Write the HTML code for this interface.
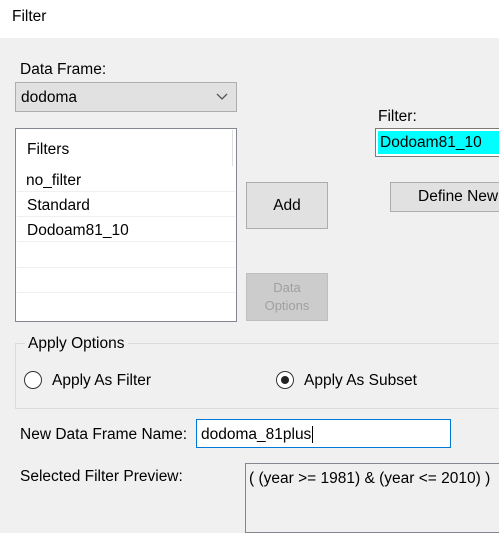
<!DOCTYPE html>
<html><head><meta charset="utf-8"><style>
*{box-sizing:border-box;margin:0;padding:0}
body{width:499px;height:525px;overflow:hidden;background:#f0f0f0;font-family:"Liberation Sans",Arial,sans-serif;font-size:15.5px;color:#000;position:relative}
.a{position:absolute;white-space:nowrap}
.btn{position:absolute;background:#e1e1e1;border:1px solid #adadad;display:flex;align-items:center;justify-content:center;text-align:center}
</style></head><body>
<div class="a" style="left:0;top:0;width:499px;height:38px;background:#fff"></div>
<div class="a" style="left:12px;top:8px;font-size:15.5px">Filter</div>

<div class="a" style="left:20px;top:61px">Data Frame:</div>
<div class="a" style="left:15px;top:82px;width:222px;height:30px;background:#e1e1e1;border:1px solid #adadad"></div>
<div class="a" style="left:21px;top:89px">dodoma</div>
<svg class="a" style="left:216px;top:93px" width="12" height="8"><path d="M1 1 L6 6 L11 1" fill="none" stroke="#555" stroke-width="1.3"/></svg>

<div class="a" style="left:15px;top:128px;width:222px;height:194px;background:#fff;border:1px solid #828790"></div>
<div class="a" style="left:232px;top:130px;width:1px;height:36px;background:#ddd"></div>
<div class="a" style="left:27px;top:141px">Filters</div>
<div class="a" style="left:26px;top:172px">no_filter</div>
<div class="a" style="left:27px;top:197px">Standard</div>
<div class="a" style="left:27px;top:222px">Dodoam81_10</div>
<div class="a" style="left:17px;top:191px;width:218px;height:1px;background:#f0f0f0"></div>
<div class="a" style="left:17px;top:216px;width:218px;height:1px;background:#f0f0f0"></div>
<div class="a" style="left:17px;top:241px;width:218px;height:1px;background:#f0f0f0"></div>
<div class="a" style="left:17px;top:267px;width:218px;height:1px;background:#f0f0f0"></div>
<div class="a" style="left:17px;top:292px;width:218px;height:1px;background:#f0f0f0"></div>

<div class="btn" style="left:246px;top:182px;width:82px;height:47px">Add</div>
<div class="btn" style="left:246px;top:273px;width:82px;height:48px;background:#cccccc;border-color:#bfbfbf;color:#a0a0a0;font-size:13px;line-height:18px">Data<br>Options</div>

<div class="a" style="left:378px;top:108px">Filter:</div>
<div class="a" style="left:375px;top:128px;width:130px;height:29px;border:1px solid #7a7a7a;background:#fff;padding:2px"><div style="background:#00ffff;height:100%;padding:3px 2px">Dodoam81_10</div></div>
<div class="btn" style="left:390px;top:182px;width:130px;height:30px;justify-content:flex-start;padding-left:27px">Define New</div>

<div class="a" style="left:15px;top:343px;width:500px;height:66px;border:1px solid #dcdcdc"></div>
<div class="a" style="left:25px;top:335px;background:#f0f0f0;padding:0 3px">Apply Options</div>
<div class="a" style="left:24px;top:371px;width:18px;height:18px;border-radius:50%;border:1px solid #333;background:#fff"></div>
<div class="a" style="left:52px;top:372px">Apply As Filter</div>
<div class="a" style="left:276px;top:371px;width:18px;height:18px;border-radius:50%;border:1px solid #333;background:#fff"></div>
<div class="a" style="left:281px;top:376px;width:8px;height:8px;border-radius:50%;background:#222"></div>
<div class="a" style="left:304px;top:372px">Apply As Subset</div>

<div class="a" style="left:20px;top:426px">New Data Frame Name:</div>
<div class="a" style="left:196px;top:419px;width:255px;height:29px;border:1px solid #0078d7;background:#fff;padding:6px 4px">dodoma_81plus<span style="border-left:1px solid #000;margin-left:1px"></span></div>

<div class="a" style="left:20px;top:468px">Selected Filter Preview:</div>
<div class="a" style="left:245px;top:463px;width:260px;height:70px;border:1px solid #828790;background:#f0f0f0;padding:6px 3px">( (year &gt;= 1981) &amp; (year &lt;= 2010) )</div>
</body></html>
